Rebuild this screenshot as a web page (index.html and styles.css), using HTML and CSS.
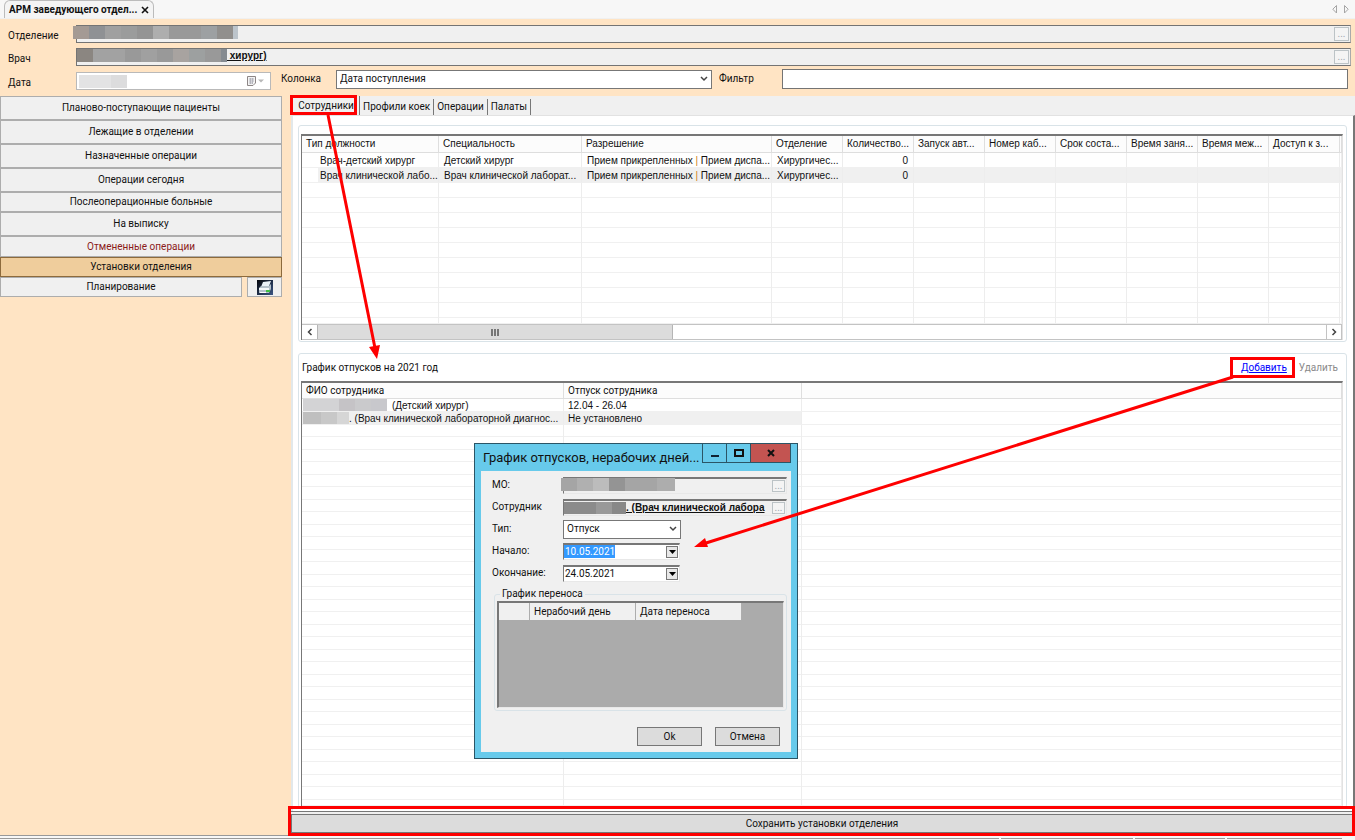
FILE: index.html
```html
<!DOCTYPE html>
<html lang="ru">

<head>
    <meta charset="UTF-8">
    <meta name="viewport" content="width=device-width, initial-scale=1.0">
    <title>АРМ заведующего отделением</title>
    <link rel="stylesheet" href="styles.css">
</head>

<body>
    <div class="tabbar">
        <div class="doc-tab">
            <span>АРМ заведующего отдел...</span>
            <button type="button" class="tab-close" aria-label="Закрыть">
                <svg width="8" height="8" viewBox="0 0 8 8"><path d="M1 1L7 7M7 1L1 7" stroke="#111" stroke-width="1.6" /></svg>
            </button>
        </div>
        <svg class="tab-arrows" width="18" height="9" viewBox="0 0 18 9">
            <path d="M4.5 0.5V8L0.8 4.2ZM12.5 0.5V8L16.2 4.2Z" fill="none" stroke="#a5a5a5" />
        </svg>
    </div>

    <!-- Header -->
    <header class="header">
        <div class="header-row">
            <label for="department">Отделение</label>
            <div class="lookup">
                <span class="mask mask-department"></span>
                <input type="text" id="department" readonly>
                <button type="button" class="dots">...</button>
            </div>
        </div>
        <div class="header-row">
            <label for="doctor">Врач</label>
            <div class="lookup">
                <span class="mask mask-doctor"></span>
                <input type="text" id="doctor" class="link-value" value="&nbsp;хирург)" readonly>
                <button type="button" class="dots">...</button>
            </div>
        </div>
        <div class="header-row filters">
            <label for="date">Дата</label>
            <div class="date-box">
                <span class="mask mask-date"></span>
                <input type="text" id="date">
                <svg width="19" height="12" viewBox="0 0 19 12">
                    <path d="M1.5 1.5H9.5V8L7 10.5H1.5Z" fill="#f4f4f4" stroke="#8d8686" />
                    <path d="M3 4H8M3 6H8M3 8H7M4.5 3V9M6.5 3V9" stroke="#b5b5bd" />
                    <path d="M12 4.5H18L15 7.5Z" fill="#b8b8b8" />
                </svg>
            </div>
            <label for="column" class="label-column">Колонка</label>
            <div class="select-box column-box">
                <select id="column">
                    <option>Дата поступления</option>
                </select>
                <svg width="8" height="6" viewBox="0 0 8 6"><path d="M1 1L4 4L7 1" fill="none" stroke="#444" stroke-width="1.5" /></svg>
            </div>
            <label for="filter" class="label-filter">Фильтр</label>
            <input type="text" id="filter" class="filter-input">
        </div>
    </header>

    <div class="content">
        <!-- Side menu -->
        <nav class="sidebar">
            <button type="button" class="menu-btn tall">Планово-поступающие пациенты</button>
            <button type="button" class="menu-btn tall">Лежащие в отделении</button>
            <button type="button" class="menu-btn tall">Назначенные операции</button>
            <button type="button" class="menu-btn tall">Операции сегодня</button>
            <button type="button" class="menu-btn">Послеоперационные больные</button>
            <button type="button" class="menu-btn tall">На выписку</button>
            <button type="button" class="menu-btn cancelled">Отмененные операции</button>
            <button type="button" class="menu-btn active">Установки отделения</button>
            <div class="menu-split">
                <button type="button" class="menu-btn">Планирование</button>
                <button type="button" class="menu-btn print-btn" aria-label="Печать">
                    <svg width="16" height="15" viewBox="0 0 16 15">
                        <defs>
                            <linearGradient id="print-bg" x1="0" y1="0" x2="1" y2="1">
                                <stop offset="0" stop-color="#05070c" />
                                <stop offset="1" stop-color="#3c5684" />
                            </linearGradient>
                        </defs>
                        <rect width="16" height="15" fill="url(#print-bg)" />
                        <path d="M6 2L14 1L12 6L4 7Z" fill="#e9f1f7" />
                        <path d="M2 8L4 6H12L14 4V9L12 13H2Z" fill="#b4c1cb" />
                        <path d="M2 8H12V10H2Z" fill="#f4f8fa" />
                        <path d="M3 12H9V13H3Z" fill="#fff" />
                        <path d="M9 10H13V12H9Z" fill="#3fc043" />
                    </svg>
                </button>
            </div>
        </nav>

        <main class="workspace">
            <div class="tabs">
                <button type="button" class="tab selected">Сотрудники</button>
                <button type="button" class="tab">Профили коек</button>
                <button type="button" class="tab">Операции</button>
                <button type="button" class="tab">Палаты</button>
            </div>

            <div class="panel">
                <section class="group staff-group">
                    <div class="grid-box">
                        <table class="grid staff-grid">
                            <colgroup>
                                <col class="w-type"><col class="w-spec"><col class="w-perm">
                                <col class="w-std"><col class="w-std"><col class="w-std"><col class="w-std">
                                <col class="w-std"><col class="w-std"><col class="w-std"><col class="w-std">
                                <col>
                            </colgroup>
                            <thead>
                                <tr>
                                    <th>Тип должности</th>
                                    <th>Специальность</th>
                                    <th>Разрешение</th>
                                    <th>Отделение</th>
                                    <th>Количество...</th>
                                    <th>Запуск авт...</th>
                                    <th>Номер каб...</th>
                                    <th>Срок соста...</th>
                                    <th>Время заня...</th>
                                    <th>Время меж...</th>
                                    <th>Доступ к з...</th>
                                    <th></th>
                                </tr>
                            </thead>
                            <tbody>
                                <tr>
                                    <td>Врач-детский хирург</td>
                                    <td>Детский хирург</td>
                                    <td>Прием прикрепленных <i>|</i> Прием диспа...</td>
                                    <td>Хирургичес...</td>
                                    <td class="num">0</td>
                                    <td></td><td></td><td></td><td></td><td></td><td></td><td></td>
                                </tr>
                                <tr class="alt">
                                    <td>Врач клинической лабо...</td>
                                    <td>Врач клинической лаборат...</td>
                                    <td>Прием прикрепленных <i>|</i> Прием диспа...</td>
                                    <td>Хирургичес...</td>
                                    <td class="num">0</td>
                                    <td></td><td></td><td></td><td></td><td></td><td></td><td></td>
                                </tr>
                                <tr class="filler">
                                    <td></td><td></td><td></td><td></td><td></td><td></td>
                                    <td></td><td></td><td></td><td></td><td></td><td></td>
                                </tr>
                            </tbody>
                        </table>
                        <div class="scrollbar">
                            <button type="button" aria-label="Влево">
                                <svg width="6" height="8" viewBox="0 0 6 8"><path d="M4.5 1L1.5 4L4.5 7" fill="none" stroke="#444" stroke-width="1.5" /></svg>
                            </button>
                            <div class="thumb">
                                <svg width="8" height="7" viewBox="0 0 8 7"><path d="M1 0V7M4 0V7M7 0V7" stroke="#555" stroke-width="1.5" /></svg>
                            </div>
                            <button type="button" aria-label="Вправо">
                                <svg width="6" height="8" viewBox="0 0 6 8"><path d="M1.5 1L4.5 4L1.5 7" fill="none" stroke="#444" stroke-width="1.5" /></svg>
                            </button>
                        </div>
                    </div>
                </section>

                <section class="group vacation-group">
                    <div class="vacation-head">
                        <span>График отпусков на 2021 год</span>
                        <a href="#" class="add-link">Добавить</a>
                        <span class="delete-link">Удалить</span>
                    </div>
                    <div class="grid-box">
                        <table class="grid vacation-grid">
                            <colgroup>
                                <col class="w-name"><col class="w-vacation"><col>
                            </colgroup>
                            <thead>
                                <tr>
                                    <th>ФИО сотрудника</th>
                                    <th>Отпуск сотрудника</th>
                                    <th></th>
                                </tr>
                            </thead>
                            <tbody>
                                <tr>
                                    <td><div class="person"><span class="mask mask-first"></span>(Детский хирург)</div></td>
                                    <td>12.04 - 26.04</td>
                                    <td></td>
                                </tr>
                                <tr class="alt">
                                    <td><div class="person"><span class="mask mask-second"></span>. (Врач клинической лабораторной диагнос...</div></td>
                                    <td>Не установлено</td>
                                    <td></td>
                                </tr>
                                <tr class="filler">
                                    <td></td><td></td><td></td>
                                </tr>
                            </tbody>
                        </table>
                    </div>
                </section>
            </div>

            <div class="save-bar">
                <button type="button" class="save-btn">Сохранить установки отделения</button>
            </div>
        </main>
    </div>

    <footer class="statusbar"><span></span><span></span><span></span><span></span></footer>

    <!-- Vacation dialog -->
    <div class="dialog" role="dialog" aria-labelledby="dialog-title">
        <div class="dialog-title">
            <span id="dialog-title">График отпусков, нерабочих дней...</span>
            <div class="window-btns">
                <button type="button" aria-label="Свернуть">
                    <svg width="10" height="10" viewBox="0 0 10 10"><path d="M1 8H9" stroke="#123" stroke-width="2" /></svg>
                </button>
                <button type="button" aria-label="Развернуть">
                    <svg width="10" height="10" viewBox="0 0 10 10"><path d="M1 2H9V8H1Z" fill="none" stroke="#111" stroke-width="2" /></svg>
                </button>
                <button type="button" class="close" aria-label="Закрыть">
                    <svg width="10" height="10" viewBox="0 0 10 10"><path d="M2 2L8 8M8 2L2 8" stroke="#111" stroke-width="2" /></svg>
                </button>
            </div>
        </div>
        <form class="dialog-body">
            <div class="form-row">
                <label for="mo">МО:</label>
                <div class="lookup small">
                    <span class="mask mask-mo"></span>
                    <input type="text" id="mo" readonly>
                    <button type="button" class="dots">...</button>
                </div>
            </div>
            <div class="form-row">
                <label for="employee">Сотрудник</label>
                <div class="lookup small">
                    <span class="mask mask-employee"></span>
                    <input type="text" id="employee" class="link-value" value=". (Врач клинической лабора" readonly>
                    <button type="button" class="dots">...</button>
                </div>
            </div>
            <div class="form-row">
                <label for="type">Тип:</label>
                <div class="select-box type-box">
                    <select id="type">
                        <option>Отпуск</option>
                    </select>
                    <svg width="8" height="6" viewBox="0 0 8 6"><path d="M1 1L4 4L7 1" fill="none" stroke="#444" stroke-width="1.5" /></svg>
                </div>
            </div>
            <div class="form-row">
                <label for="start">Начало:</label>
                <div class="date-field">
                    <input type="text" id="start" class="marked" value="10.05.2021">
                    <button type="button" aria-label="Календарь"><svg width="7" height="4" viewBox="0 0 7 4"><path d="M0 0H7L3.5 4Z" /></svg></button>
                </div>
            </div>
            <div class="form-row">
                <label for="end">Окончание:</label>
                <div class="date-field">
                    <input type="text" id="end" value="24.05.2021">
                    <button type="button" aria-label="Календарь"><svg width="7" height="4" viewBox="0 0 7 4"><path d="M0 0H7L3.5 4Z" /></svg></button>
                </div>
            </div>
            <fieldset class="transfer">
                <legend>График переноса</legend>
                <div class="transfer-box">
                    <table>
                        <thead>
                            <tr>
                                <th class="w-mark"></th>
                                <th class="w-day">Нерабочий день</th>
                                <th class="w-day">Дата переноса</th>
                            </tr>
                        </thead>
                    </table>
                </div>
            </fieldset>
            <div class="dialog-btns">
                <button type="button">Ok</button>
                <button type="button">Отмена</button>
            </div>
        </form>
    </div>

    <!-- Red hints over the window -->
    <svg class="hints" viewBox="0 0 1355 840" preserveAspectRatio="none">
        <g fill="none" stroke="#fe0000" stroke-width="3">
            <rect x="291.5" y="96.5" width="64" height="17" />
            <rect x="1231.5" y="358.5" width="62" height="18" />
            <rect x="289.5" y="807.5" width="1064" height="27" />
            <path d="M328 115L375 348M1233 377L706 543" />
        </g>
        <path d="M377 359L369 347L380 345ZM694 547L705 538L708 547Z" fill="#fe0000" />
    </svg>
</body>

</html>
```
FILE: styles.css
```css
/* General Reset */
* {
    margin: 0;
    padding: 0;
    box-sizing: border-box;
}

body {
    display: flex;
    flex-direction: column;
    height: 100vh;
    position: relative;
    overflow: hidden;
    background: #f0f0f0;
    color: #111;
    font-family: Roboto, 'Open Sans', sans-serif;
    font-size: 10px;
    line-height: 14px;
}

button,
input,
select {
    font: inherit;
    color: inherit;
    border: none;
    border-radius: 0;
    outline: none;
    background: none;
}

button {
    display: flex;
    justify-content: center;
    align-items: center;
}

svg {
    flex: none;
}

/* Document tabs */
.tabbar {
    display: flex;
    justify-content: space-between;
    align-items: flex-end;
    height: 19px;
    padding: 0 5px 0 4px;
    background: #f7f7f7;
    border-bottom: 1px solid #f0f0f0;
}

.doc-tab {
    display: flex;
    align-items: center;
    gap: 4px;
    height: 18px;
    padding: 0 4px;
    border: 1px solid #bbb;
    border-bottom: none;
    border-radius: 6px 6px 0 0;
    background: #f4f4f4;
    font-weight: bold;
}

.tab-arrows {
    margin-bottom: 4px;
}

/* Header */
.header {
    display: flex;
    flex-direction: column;
    gap: 5px;
    height: 77px;
    padding: 6px 4px 0 8px;
    background: #ffe4c4;
}

.header-row {
    display: flex;
    align-items: center;
    height: 18px;
}

.header-row label:first-child {
    width: 68px;
    padding-top: 3px;
}

.lookup {
    display: flex;
    align-items: center;
    flex: 1;
    min-width: 0;
    height: 18px;
    padding-right: 1px;
    border: 1px solid #747474;
    border-right-color: #aaa;
    background: #f0f0f0;
}

.lookup input {
    flex: 1;
    min-width: 0;
}

.link-value {
    font: bold 10px 'Liberation Sans', sans-serif;
    text-decoration: underline;
}

.header .link-value {
    padding-bottom: 3px;
}

.dots {
    width: 15px;
    height: 14px;
    border: 1px solid #bcc3c6;
    background: #f4f4f4;
    color: #a0a8b0;
}

.mask {
    flex: none;
    height: 13px;
}

.mask-department {
    width: 165px;
    margin: -4px 0 0 -4px;
    background: linear-gradient(90deg, #a49a94 0 16px, #8f9194 16px 32px, #a0a0a0 32px 48px, #9b9c9c 48px 64px, #949494 64px 80px, #aeaeae 80px 96px, #999 96px 128px, #9da0a2 128px 144px, #918f8d 144px 160px, #bcc4cb 160px);
}

.mask-doctor {
    width: 150px;
    margin-top: -3px;
    background: linear-gradient(90deg, #8b8681 0 16px, #a2a2a2 16px 48px, #999 48px 64px, #a0a0a0 64px 80px, #999 80px 96px, #a8a3a0 96px 112px, #9da0a0 112px 128px, #999 128px 144px, #858b91 144px);
}

.mask-date {
    width: 48px;
    margin-left: 2px;
    background: linear-gradient(90deg, #e3e3e4 0 32px, #dcdcdd 32px);
}

.date-box {
    display: flex;
    align-items: center;
    width: 195px;
    height: 18px;
    padding-right: 5px;
    border: 1px solid #b9b9b9;
    background: #fff;
}

.date-box input {
    flex: 1;
    min-width: 0;
}

.filters {
    height: 20px;
}

.label-column {
    width: 55px;
    margin: 0 0 4px 10px;
}

.label-filter {
    width: 63px;
    margin: 0 0 4px 7px;
}

.select-box {
    display: flex;
    align-items: center;
    position: relative;
    height: 19px;
    border: 1px solid #777;
    background: #fff;
}

.select-box select {
    width: 100%;
    height: 100%;
    padding: 0 16px 0 3px;
    appearance: none;
}

.select-box svg {
    position: absolute;
    right: 3px;
}

.column-box {
    flex: 376;
}

.filter-input {
    flex: 567;
    min-width: 0;
    height: 20px;
    margin-right: 3px;
    border: 1px solid #747474;
    background: #fff;
}

.column-box,
.filter-input {
    margin-bottom: 4px;
}

/* Content */
.content {
    display: flex;
    flex: 1;
    min-height: 0;
}

.sidebar {
    width: 291px;
    padding-right: 9px;
    background: #ffe4c4;
}

.menu-btn {
    width: 100%;
    height: 20px;
    border: 1px solid #adadad;
    background: #f0f0f0;
}

.menu-btn.tall {
    height: 24px;
}

.menu-btn.cancelled {
    height: 21px;
    color: #8b1a1a;
}

.menu-btn.active {
    border-color: #8c6a3c;
    background: #efcd9c;
}

.menu-split {
    display: flex;
    gap: 5px;
}

.menu-btn.print-btn {
    width: 35px;
    flex: none;
}

.workspace {
    display: flex;
    flex-direction: column;
    flex: 1;
    min-width: 0;
}

.tabs {
    display: flex;
    align-items: flex-end;
    height: 19px;
    padding-left: 2px;
}

.tab {
    height: 16px;
    padding: 0 3px;
    border-right: 1px solid #777;
}

.tab.selected {
    height: 19px;
    width: 67px;
}

.panel {
    display: flex;
    flex-direction: column;
    flex: 1;
    min-height: 0;
    gap: 11px;
    padding: 9px 6px 3px 5px;
    border-top: 1px solid #e2e2e2;
    border-left: 2px solid #e2e8ea;
    border-right: 2px solid #777;
    background: #fff;
}

.group {
    border: 1px solid #d9e3e8;
    border-radius: 3px;
    padding: 0 3px 1px 2px;
}

.staff-group {
    padding-top: 8px;
}

.vacation-group {
    display: flex;
    flex-direction: column;
    flex: 1;
    min-height: 0;
}

.grid-box {
    border-top: 2px solid #777;
    border-left: 1px solid #777;
    border-right: 1px solid #e2e2e2;
}

.vacation-group .grid-box {
    flex: 1;
    min-height: 0;
}

/* Grids */
.grid {
    width: 100%;
    table-layout: fixed;
    border-collapse: separate;
    border-spacing: 0;
    line-height: 12px;
}

.staff-grid {
    font-family: 'Liberation Sans', sans-serif;
}

.grid th,
.grid td {
    padding: 0 0 0 4px;
    border-right: 1px solid #ededed;
    border-bottom: 1px solid #f0f0f0;
    font-weight: normal;
    text-align: left;
    white-space: nowrap;
    overflow: hidden;
}

.grid th {
    height: 16px;
    border-color: #dedede;
    background: #fcfcfc;
}

.grid i {
    color: #d08020;
    font-style: normal;
}

.staff-grid th {
    height: 17px;
}

.staff-grid td {
    height: 15px;
    padding: 2px 0 0 5px;
}

.staff-grid .num {
    padding-right: 5px;
    text-align: right;
}

.staff-grid td:first-child {
    padding-left: 18px;
}

.staff-grid .alt td {
    background: #f0f0f0;
}

.staff-grid .alt td:first-child {
    background: linear-gradient(90deg, #fff 16px, #f0f0f0 16px);
}

.staff-grid .filler td {
    height: 141px;
    background: repeating-linear-gradient(#fff 0 14px, #f0f0f0 14px 15px);
}

.w-type {
    width: 137px;
}

.w-spec {
    width: 143px;
}

.w-perm {
    width: 190px;
}

.w-std {
    width: 71px;
}

.w-name {
    width: 262px;
}

.w-vacation {
    width: 238px;
}

.vacation-grid {
    height: 100%;
}

.vacation-grid td {
    height: 13px;
    font-family: 'Liberation Sans', sans-serif;
    line-height: 11px;
}

.vacation-grid .alt td {
    background: #f0f0f0;
}

.vacation-grid .alt td:last-child {
    background: #fff;
}

.vacation-grid .filler td {
    height: auto;
    background: repeating-linear-gradient(#fff 0 11px, #f0f0f0 11px 12px, #fff 12px 24px, #f0f0f0 24px 25px);
}

.person {
    display: flex;
    align-items: center;
    height: 12px;
    margin-left: -3px;
}

.person .mask {
    height: 12px;
}

.mask-first {
    width: 84px;
    margin-right: 5px;
    background: linear-gradient(90deg, #d3d3d5 0 36px, #c5c3c6 36px 52px, #cacacc 52px 68px, #c8c8cc 68px);
}

.mask-second {
    width: 46px;
    background: linear-gradient(90deg, #bfbfbf 0 18px, #c8c8c8 18px 34px, #d6d6d6 34px);
}

.scrollbar {
    display: flex;
    justify-content: space-between;
    height: 16px;
    border: 1px solid #c3c3c3;
    border-left: none;
}

.scrollbar button {
    width: 15px;
    border-left: 1px solid #c3c3c3;
}

.scrollbar button:first-child {
    border-left: none;
}

.thumb {
    display: flex;
    justify-content: center;
    align-items: center;
    width: 356px;
    margin-right: auto;
    border: 1px solid #b5b5b5;
    border-width: 0 1px;
    background: #dcdcdc;
}

.vacation-head {
    display: flex;
    align-items: center;
    height: 27px;
    padding: 0 5px 0 1px;
}

.add-link {
    margin: 0 12px 0 auto;
    color: #00f;
}

.delete-link {
    color: #8a8a8a;
}

.save-bar {
    padding: 2px 2px 2px 0;
    border-top: 1px solid #777;
}

.save-btn {
    width: 100%;
    height: 19px;
    border: 1px solid #777;
    background: #dcdcdc;
}

.statusbar {
    display: flex;
    gap: 2px;
    height: 5px;
    padding: 2px 13px 0 0;
    border-top: 1px solid #999;
    background: #f7f7f7;
}

.statusbar span {
    width: 90px;
    height: 1px;
    background: #999;
}

.statusbar span:first-child {
    flex: 1;
}

.statusbar span:nth-child(2) {
    width: 132px;
}

.statusbar span:last-child {
    width: 115px;
}

/* Dialog */
.dialog {
    position: absolute;
    top: 443px;
    left: 474px;
    width: 324px;
    padding: 0 6px 6px;
    border: 1px solid #2b5566;
    background: #67caeb;
}

.dialog-title {
    display: flex;
    justify-content: space-between;
    height: 27px;
    padding-left: 2px;
    font-size: 13px;
    line-height: 27px;
    white-space: nowrap;
}

.window-btns {
    display: flex;
}

.window-btns button {
    width: 24px;
    height: 19px;
    border: 1px solid #2b5566;
    border-top: none;
    border-right: none;
}

.window-btns .close {
    width: 41px;
    border-right: 1px solid #2b5566;
    background: #c35451;
}

.dialog-body {
    padding: 3px 4px 6px 11px;
    background: #f0f0f0;
}

.form-row {
    display: flex;
    align-items: center;
    height: 22px;
}

.form-row label {
    width: 71px;
}

.lookup.small {
    height: 17px;
    border-color: #777 #e8e8e8 #e8e8e8 #777;
    border-top-width: 2px;
}

.small .dots {
    width: 13px;
    height: 12px;
}

.mask-mo {
    width: 114px;
    margin: -2px 0 0 -3px;
    background: linear-gradient(90deg, #a5a5a5 0 16px, #b0b0b0 16px 32px, #bcbcbc 32px 48px, #949494 48px 64px, #a5a5a5 64px 96px, #adadad 96px);
}

.mask-employee {
    width: 62px;
    height: 12px;
    background: linear-gradient(90deg, #8b8b8b 0 32px, #999 32px 48px, #888 48px);
}

.type-box {
    width: 118px;
}

.date-field {
    display: flex;
    align-items: center;
    width: 117px;
    height: 17px;
    padding-right: 1px;
    border: 1px solid #777;
    border-top-width: 2px;
    border-right-color: #e8e8e8;
    border-bottom-color: #e8e8e8;
    background: #fff;
}

.date-field input {
    width: 51px;
    height: 13px;
    margin-right: auto;
    padding-left: 1px;
}

.date-field .marked {
    background: #3399ff;
    color: #fff;
}

.date-field button {
    width: 12px;
    height: 12px;
    border: 1px solid #777;
    background: #e8e8e8;
}

.transfer {
    margin: 3px 0 0 2px;
    padding: 0 2px 2px;
    border: 1px solid #d9e3e8;
    border-radius: 3px;
}

.transfer legend {
    margin-left: 3px;
    padding: 0 2px;
}

.transfer-box {
    height: 107px;
    border: 1px solid #e8e8e8;
    border-top: 2px solid #777;
    border-left: 2px solid #777;
    background: #ababab;
}

.transfer-box table {
    border-collapse: separate;
    border-spacing: 0;
    background: #f0f0f0;
}

.transfer-box th {
    height: 17px;
    padding: 0 4px;
    border-right: 1px solid #adadad;
    font-weight: normal;
    text-align: left;
}

.transfer-box .w-mark {
    width: 31px;
}

.transfer-box .w-day {
    width: 106px;
}

.dialog-btns {
    display: flex;
    justify-content: flex-end;
    gap: 13px;
    padding: 16px 7px 0 0;
}

.dialog-btns button {
    width: 65px;
    height: 19px;
    border: 1px solid #777;
    background: #dcdcdc;
}

/* Hints */
.hints {
    position: absolute;
    top: 0;
    left: 0;
    width: 100%;
    height: 100%;
    pointer-events: none;
}
```
